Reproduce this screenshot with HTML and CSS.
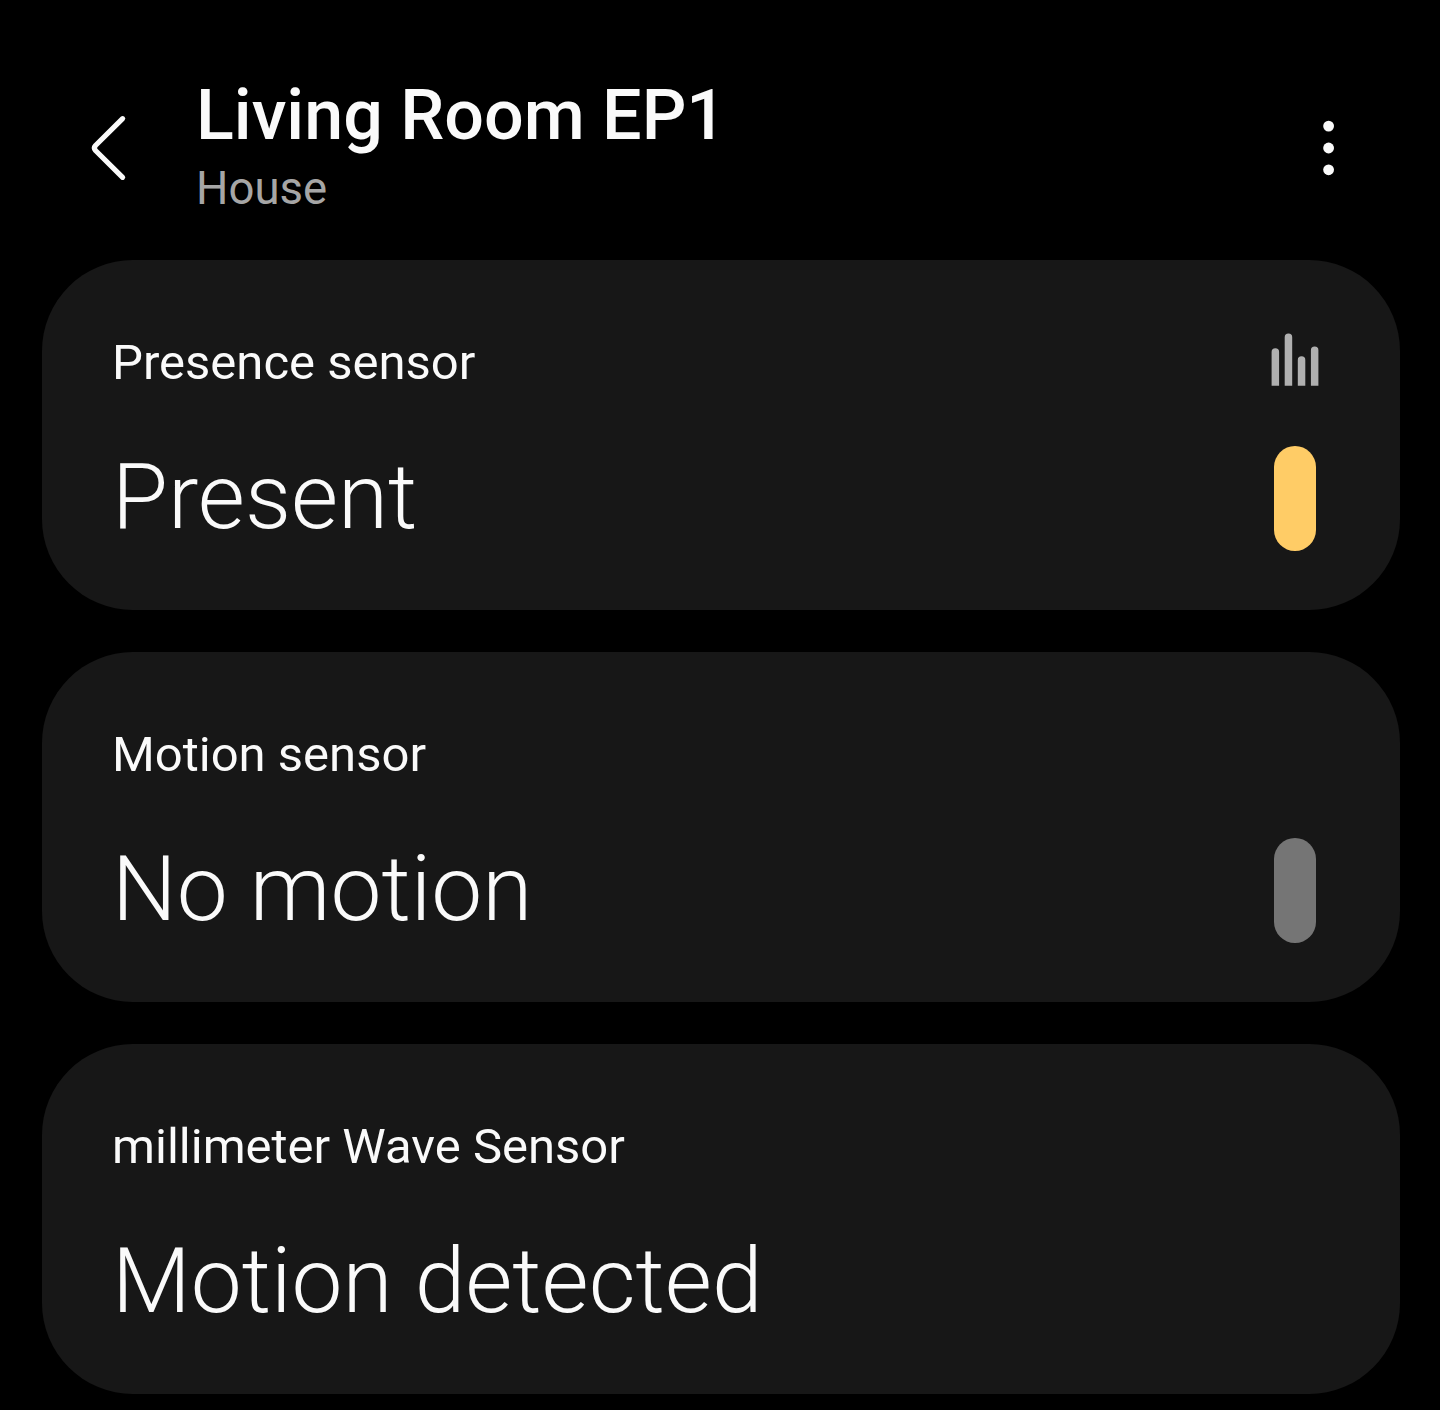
FILE: index.html
```html
<!DOCTYPE html>
<html lang="en">
<head>
<meta charset="utf-8">
<title>Living Room EP1</title>
<link rel="stylesheet" href="styles.css">
</head>
<body>
<header class="header">
  <button class="icon-button back" aria-label="Back">
    <svg width="40" height="70" viewBox="0 0 40 70" fill="none" stroke="#fafafa" stroke-width="5.200" stroke-linecap="round" stroke-linejoin="round"><path d="M34.600 5.700 7.500 32.500Q5.300 35 7.500 37.500L34.600 64.300"/></svg>
  </button>
  <div class="heading">
    <h1 class="title">Living Room EP1</h1>
    <p class="subtitle">House</p>
  </div>
  <button class="icon-button more" aria-label="More options">
    <svg width="12" height="56" viewBox="0 0 12 56" fill="#fafafa"><circle cx="6.600" cy="6.100" r="5.400"/><circle cx="6.600" cy="28" r="5.400"/><circle cx="6.600" cy="49.800" r="5.400"/></svg>
  </button>
</header>
<main class="cards">
  <section class="card">
    <div class="info">
      <h2 class="label">Presence sensor</h2>
      <p class="value">Present</p>
    </div>
    <div class="side">
      <svg class="history" width="48" height="54" viewBox="0 0 48 54" fill="#b0b0b0"><path d="M.6 53.800V20a3.750 3.750 0 0 1 7.500 0V53.800ZM13.700 53.800V5.200a3.750 3.750 0 0 1 7.500 0V53.800ZM26.800 53.800V27.900a3.750 3.750 0 0 1 7.500 0V53.800ZM39.900 53.800V18.200a3.750 3.750 0 0 1 7.500 0V53.800Z"/></svg>
      <span class="indicator active"></span>
    </div>
  </section>
  <section class="card">
    <div class="info">
      <h2 class="label">Motion sensor</h2>
      <p class="value">No motion</p>
    </div>
    <div class="side"><span class="indicator"></span></div>
  </section>
  <section class="card">
    <div class="info">
      <h2 class="label">millimeter Wave Sensor</h2>
      <p class="value">Motion detected</p>
    </div>
  </section>
</main>
</body>
</html>
```
FILE: styles.css
```css
* { box-sizing: border-box; }
body { margin: 0; background: #000; color: #fafafa; font-family: Roboto, sans-serif; }
h1, h2, p { margin: 0; }
.header { display: flex; height: 260px; padding: 0 106px 0 88px; }
.icon-button { display: block; border: 0; padding: 0; background: none; }
.icon-button svg { display: block; overflow: visible; }
.back { width: 40px; height: 70px; margin-top: 113px; }
.more { width: 12px; height: 56px; margin-top: 120px; margin-left: auto; }
.heading { padding: 74px 0 0 68px; white-space: nowrap; }
.title { font-size: 70px; line-height: 82px; font-weight: 500; }
.subtitle { font-size: 45.5px; line-height: 66px; color: #a6a6a6; }
.cards { display: flex; flex-direction: column; gap: 42px; padding: 0 40px 16px 42px; }
.card { display: flex; justify-content: space-between; height: 350px; padding: 72px 80px 0 70px; border-radius: 91px; background: #171717; }
.label { font-size: 49px; line-height: 62px; font-weight: 400; }
.value { margin-top: 48px; font-size: 91px; line-height: 110px; font-weight: 300; }
.side { display: flex; flex-direction: column; align-items: center; justify-content: flex-end; width: 50px; height: 219px; }
.history { margin-bottom: 60px; }
.indicator { width: 42px; height: 105px; border-radius: 21px; background: #757575; }
.indicator.active { background: #ffcc66; }
```
